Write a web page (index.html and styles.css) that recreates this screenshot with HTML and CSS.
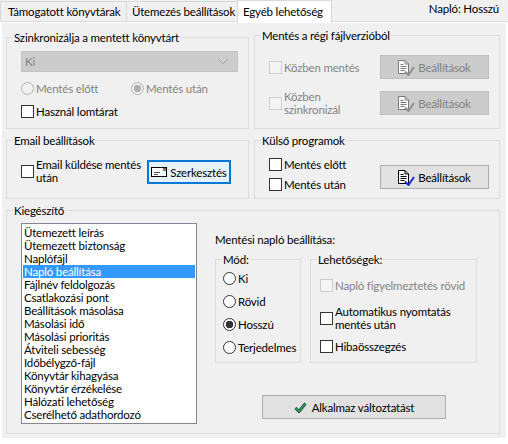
FILE: index.html
```html
<!DOCTYPE html>
<html lang="hu">
<head>
  <meta charset="UTF-8" />
  <title>Egyéb lehetőség</title>
  <link rel="stylesheet" href="styles.css">
</head>
<body>

<svg class="defs" width="0" height="0">
  <symbol id="doc" viewBox="0 0 11 14">
    <path d="M.5.5h6.500l3.500 3.500v9.500h-10z" fill="#fff" stroke="currentColor"/>
    <path d="M7 .5v3.500h3.500M2.500 4.500h3M2.500 6.500h6M2.500 8.500h6M2.500 10.500h4" fill="none" stroke="currentColor"/>
  </symbol>
</svg>

<div class="window">
  <div class="tabbar">
    <div class="tab">Támogatott könyvtárak</div>
    <div class="tab">Ütemezés beállítások</div>
    <div class="tab active">Egyéb lehetőség</div>
    <div class="log-mode">Napló: Hosszú</div>
  </div>

  <div class="pane">
    <div class="top-row">
      <fieldset class="group sync">
        <legend>Szinkronizálja a mentett könyvtárt</legend>
        <div class="combo disabled">
          <span>Ki</span>
          <svg width="12" height="7" viewBox="0 0 12 7"><path d="M1 1l5 5 5-5" fill="none" stroke="#a8a8a8"/></svg>
        </div>
        <div class="radio-row">
          <label class="opt disabled"><input type="radio" name="sync" disabled>Mentés előtt</label>
          <label class="opt disabled"><input type="radio" name="sync" checked disabled>Mentés után</label>
        </div>
        <label class="opt trash"><input type="checkbox">Használ lomtárat</label>
      </fieldset>

      <fieldset class="group versions">
        <legend>Mentés a régi fájlverzióból</legend>
        <div class="version-grid">
          <label class="opt disabled"><input type="checkbox" disabled>Közben mentés</label>
          <button class="btn settings" disabled>
            <span class="doc-icon muted"><svg width="11" height="14"><use href="#doc"/></svg><svg class="tick" width="11" height="10" viewBox="0 0 11 10"><path d="M1 5.500l3.500 3.500 5.500-8" fill="none" stroke="#8f8f8f" stroke-width="2"/></svg></span>
            Beállítások
          </button>
          <label class="opt disabled"><input type="checkbox" disabled><span>Közben<br>szinkronizál</span></label>
          <button class="btn settings" disabled>
            <span class="doc-icon muted"><svg width="11" height="14"><use href="#doc"/></svg><svg class="tick" width="11" height="10" viewBox="0 0 11 10"><path d="M1 5.500l3.500 3.500 5.500-8" fill="none" stroke="#8f8f8f" stroke-width="2"/></svg></span>
            Beállítások
          </button>
        </div>
      </fieldset>
    </div>

    <div class="mid-row">
      <fieldset class="group email">
        <legend>Email beállítások</legend>
        <div class="email-row">
          <label class="opt"><input type="checkbox"><span>Email küldése mentés<br>után</span></label>
          <button class="btn edit">
            <svg width="16" height="10" viewBox="0 0 16 10">
              <rect x=".5" y=".5" width="15" height="9" fill="#fff" stroke="#000"/>
              <path d="M3 5.500h6M3 7.500h4" stroke="#555"/>
              <rect x="12" y="1" width="3" height="1.500" fill="#e0206a"/>
              <rect x="12" y="2.500" width="3" height="1.500" fill="#1aa050"/>
            </svg>
            Szerkesztés
          </button>
        </div>
      </fieldset>

      <fieldset class="group external">
        <legend>Külső programok</legend>
        <div class="external-row">
          <div class="stack">
            <label class="opt"><input type="checkbox">Mentés előtt</label>
            <label class="opt"><input type="checkbox">Mentés után</label>
          </div>
          <button class="btn settings">
            <span class="doc-icon"><svg width="11" height="14"><use href="#doc"/></svg><svg class="tick" width="11" height="10" viewBox="0 0 11 10"><path d="M1 5.500l3.500 3.500 5.500-8" fill="none" stroke="#1c2fc8" stroke-width="2"/></svg></span>
            Beállítások
          </button>
        </div>
      </fieldset>
    </div>

    <fieldset class="group extras">
      <legend>Kiegészítő</legend>
      <div class="extras-row">
        <ul class="list">
          <li>Ütemezett leírás</li>
          <li>Ütemezett biztonság</li>
          <li>Naplófájl</li>
          <li class="selected">Napló beállítása</li>
          <li>Fájlnév feldolgozás</li>
          <li>Csatlakozási pont</li>
          <li>Beállítások másolása</li>
          <li>Másolási idő</li>
          <li>Másolási prioritás</li>
          <li>Átviteli sebesség</li>
          <li>Időbélygző-fájl</li>
          <li>Könyvtár kihagyása</li>
          <li>Könyvtár érzékelése</li>
          <li>Hálózati lehetőség</li>
          <li>Cserélhető adathordozó</li>
        </ul>

        <div class="log-settings">
          <div class="caption">Mentési napló beállítása:</div>
          <div class="log-groups">
            <fieldset class="group mode">
              <legend>Mód:</legend>
              <label class="opt"><input type="radio" name="mode">Ki</label>
              <label class="opt"><input type="radio" name="mode">Rövid</label>
              <label class="opt"><input type="radio" name="mode" checked>Hosszú</label>
              <label class="opt"><input type="radio" name="mode">Terjedelmes</label>
            </fieldset>
            <fieldset class="group options">
              <legend>Lehetőségek:</legend>
              <label class="opt disabled"><input type="checkbox" disabled>Napló figyelmeztetés rövid</label>
              <label class="opt"><input type="checkbox"><span>Automatikus nyomtatás<br>mentés után</span></label>
              <label class="opt"><input type="checkbox">Hibaösszegzés</label>
            </fieldset>
          </div>
          <button class="btn apply">
            <svg width="13" height="11" viewBox="0 0 13 11">
              <path d="M1.500 6l3.500 3.500 6.500-8" fill="none" stroke="#0c2a5a" stroke-width="2.800"/>
              <path d="M1.500 6l3.500 3.500 6.500-8" fill="none" stroke="#35b82f" stroke-width="1.400"/>
            </svg>
            Alkalmaz változtatást
          </button>
        </div>
      </div>
    </fieldset>
  </div>
</div>

</body>
</html>
```

FILE: styles.css
```css
body {
  margin: 0;
  background: #fff;
  font-family: Lato, sans-serif;
  font-size: 11.5px;
  letter-spacing: -0.18px;
  line-height: 13px;
  color: #000;
}

.defs {
  position: absolute;
}

.window {
  width: 508px;
  height: 444px;
  overflow: hidden;
}

/* tabs */
.tabbar {
  display: flex;
  height: 21px;
  background: #f0f0f0;
  white-space: nowrap;
}

.tab {
  height: 20px;
  margin-top: 1px;
  padding: 0 7px;
  line-height: 20px;
  background: #f0f0f0;
  border: 1px solid #d9d9d9;
  border-bottom: none;
  box-sizing: border-box;
}

.tab:nth-child(1) { width: 127px; }
.tab:nth-child(2) { width: 112px; margin-left: -1px; padding: 0 5px; }

.tab.active {
  position: relative;
  z-index: 1;
  width: 95px;
  height: 23px;
  margin-top: 0;
  margin-left: -1px;
  padding: 1px 5px 0;
  background: #fff;
}

.log-mode {
  margin-left: auto;
  padding-right: 9px;
  line-height: 18px;
}

.pane {
  height: 419px;
  padding: 6px 7px 0 5px;
  background: #f0f0f0;
  border: 1px solid #fff;
  border-top-color: #d9d9d9;
  outline: 1px solid #fff;
  outline-offset: -2px;
  box-sizing: border-box;
}

/* groups */
.group {
  --pad: 14px;
  margin: 0;
  padding: 0 0 0 var(--pad);
  min-width: 0;
  border: 1px solid #dcdcdc;
  box-sizing: border-box;
}

.group legend {
  height: 15px;
  margin-left: calc(6px - var(--pad));
  padding: 0 1px;
  line-height: 15px;
  white-space: nowrap;
}

.top-row,
.mid-row {
  display: grid;
  grid-template-columns: 243px 246px;
  column-gap: 5px;
  margin-bottom: 4px;
}

.top-row { height: 101px; }
.mid-row { height: 66px; }

.sync {
  margin-top: 2px;
  padding-top: 6px;
  padding-right: 10px;
}

.versions {
  padding-top: 12px;
  padding-right: 9px;
}

.email {
  padding-top: 12px;
}

.external {
  padding-right: 9px;
}

.extras {
  width: 494px;
  height: 231px;
  padding-top: 5px;
}

/* inputs */
.opt {
  display: flex;
  align-items: center;
  gap: 2px;
  min-height: 15px;
  white-space: nowrap;
}

.opt input {
  appearance: none;
  flex: none;
  width: 13px;
  height: 13px;
  margin: 0;
  background: #fff;
  border: 1px solid #333;
  box-sizing: border-box;
}

.opt input[type="radio"] {
  border-radius: 50%;
}

.opt input[type="radio"]:checked {
  background: radial-gradient(circle, #333 0 3.500px, #fff 4px);
}

.opt.disabled {
  color: #838383;
}

.opt.disabled input {
  background: #f4f4f4;
  border-color: #cdcdcd;
}

.opt.disabled input[type="radio"] {
  background: #f0f0f0;
  border-color: #b4b4b4;
}

.opt.disabled input[type="radio"]:checked {
  background: radial-gradient(circle, #b0b0b0 0 3.500px, #f0f0f0 4px);
}

.combo {
  display: flex;
  align-items: center;
  justify-content: space-between;
  height: 21px;
  padding: 0 8px 0 3px;
  background: #ccc;
  border: 1px solid #c4c4c4;
  box-sizing: border-box;
}

.combo.disabled {
  color: #838383;
}

.radio-row {
  display: grid;
  grid-template-columns: 110px auto;
  margin-top: 9px;
}

.trash {
  margin-top: 8px;
}

/* buttons */
.btn {
  display: flex;
  align-items: center;
  justify-content: center;
  gap: 3px;
  height: 24px;
  padding: 0;
  font: inherit;
  letter-spacing: inherit;
  color: #000;
  background: #e1e1e1;
  border: 1px solid #adadad;
  box-sizing: border-box;
}

.btn:disabled {
  color: #838383;
  background: #ccc;
  border-color: #bfbfbf;
}

.settings {
  width: 109px;
}

.doc-icon {
  display: flex;
  position: relative;
  width: 17px;
  height: 15px;
  color: #000;
}

.doc-icon.muted {
  color: #7a7a7a;
}

.tick {
  position: absolute;
  right: 0;
  bottom: -1px;
}

.version-grid {
  display: grid;
  grid-template-columns: 111px 109px;
  row-gap: 11px;
  align-items: center;
}

.email-row {
  display: grid;
  grid-template-columns: 126px 84px;
}

.email-row .opt {
  align-self: start;
  margin-top: -2px;
}

.edit {
  gap: 3px;
  background: #e5f1fb;
  border: 2px solid #0078d7;
}

.external-row {
  display: grid;
  grid-template-columns: 111px 109px;
}

.external-row .btn {
  margin-top: 17px;
}

.stack {
  display: flex;
  flex-direction: column;
  gap: 5px;
  margin-top: 9px;
}

/* list */
.extras-row {
  display: grid;
  grid-template-columns: 176px auto;
  column-gap: 18px;
}

.list {
  height: 201px;
  margin: 0;
  padding: 2px 1px;
  list-style: none;
  background: #fff;
  border: 1px solid #828790;
  box-sizing: border-box;
}

.list li {
  height: 13px;
  padding-left: 1px;
}

.list .selected {
  color: #fff;
  background: #3399ff;
}

.log-settings {
  padding-top: 9px;
}

.caption {
  height: 15px;
  line-height: 15px;
}

.log-groups {
  display: flex;
  gap: 9px;
  margin-top: 5px;
}

.mode {
  --pad: 7px;
  width: 86px;
  height: 111px;
  padding-top: 4px;
}

.mode .opt + .opt {
  margin-top: 8px;
}

.options {
  --pad: 9px;
  width: 167px;
  height: 111px;
  padding-top: 11px;
}

.options .opt + .opt {
  margin-top: 8px;
}

.options .opt:nth-of-type(2) {
  margin-top: 12px;
}

.apply {
  gap: 5px;
  width: 184px;
  margin: 32px 0 0 47px;
}
```
